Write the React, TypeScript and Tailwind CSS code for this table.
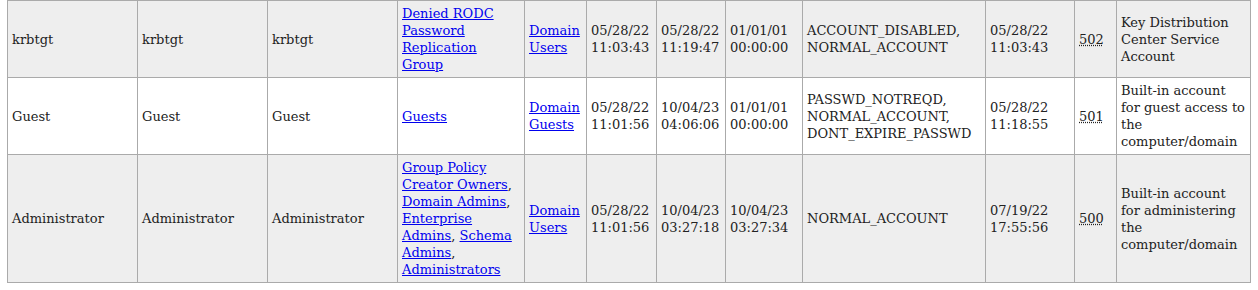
import React from 'react';

type Link = { text: string; href?: boolean };

type Row = {
  name: string;
  sam: string;
  cn: string;
  groups: string[];
  primary: string;
  created: string[];
  changed: string[];
  logon: string[];
  flags: string[];
  pwdSet: string[];
  rid: string;
  desc: string;
};

const rows: Row[] = [
  {
    name: 'krbtgt',
    sam: 'krbtgt',
    cn: 'krbtgt',
    groups: ['Denied RODC Password Replication Group'],
    primary: 'Domain Users',
    created: ['05/28/22', '11:03:43'],
    changed: ['05/28/22', '11:19:47'],
    logon: ['01/01/01', '00:00:00'],
    flags: ['ACCOUNT_DISABLED,', 'NORMAL_ACCOUNT'],
    pwdSet: ['05/28/22', '11:03:43'],
    rid: '502',
    desc: 'Key Distribution Center Service Account',
  },
  {
    name: 'Guest',
    sam: 'Guest',
    cn: 'Guest',
    groups: ['Guests'],
    primary: 'Domain Guests',
    created: ['05/28/22', '11:01:56'],
    changed: ['10/04/23', '04:06:06'],
    logon: ['01/01/01', '00:00:00'],
    flags: ['PASSWD_NOTREQD,', 'NORMAL_ACCOUNT,', 'DONT_EXPIRE_PASSWD'],
    pwdSet: ['05/28/22', '11:18:55'],
    rid: '501',
    desc: 'Built-in account for guest access to the computer/domain',
  },
  {
    name: 'Administrator',
    sam: 'Administrator',
    cn: 'Administrator',
    groups: [
      'Group Policy Creator Owners',
      'Domain Admins',
      'Enterprise Admins',
      'Schema Admins',
      'Administrators',
    ],
    primary: 'Domain Users',
    created: ['05/28/22', '11:01:56'],
    changed: ['10/04/23', '03:27:18'],
    logon: ['10/04/23', '03:27:34'],
    flags: ['NORMAL_ACCOUNT'],
    pwdSet: ['07/19/22', '17:55:56'],
    rid: '500',
    desc: 'Built-in account for administering the computer/domain',
  },
];

const widths = [130, 130, 130, 127, 62, 70, 69, 77, 183, 89, 42, 134];

const cell = 'border border-[#aaa] px-[4px] py-[4px] align-middle';
const link = 'text-[#00e] underline';

function Lines({ parts }: { parts: string[] }) {
  return (
    <>
      {parts.map((p, i) => (
        <React.Fragment key={i}>
          {i > 0 && <br />}
          {p}
        </React.Fragment>
      ))}
    </>
  );
}

export default function App() {
  return (
    <div
      className="bg-white pl-[7px] text-[13px] leading-[17px] text-[#222]"
      style={{ fontFamily: '"DejaVu Serif", serif' }}
    >
      <table className="table-fixed border-collapse w-[1244px]">
        <colgroup>
          {widths.map((w, i) => (
            <col key={i} style={{ width: w }} />
          ))}
        </colgroup>
        <tbody>
          {rows.map((r, i) => (
            <tr key={r.rid} className={i % 2 === 0 ? 'bg-[#eee]' : 'bg-white'}>
              <td className={cell}>{r.name}</td>
              <td className={cell}>{r.sam}</td>
              <td className={cell}>{r.cn}</td>
              <td className={cell}>
                {r.groups.map((g, j) => (
                  <React.Fragment key={g}>
                    <a href="#" className={link}>
                      {g}
                    </a>
                    {j < r.groups.length - 1 && ', '}
                  </React.Fragment>
                ))}
              </td>
              <td className={cell}>
                <a href="#" className={link}>
                  {r.primary}
                </a>
              </td>
              <td className={cell}>
                <Lines parts={r.created} />
              </td>
              <td className={cell}>
                <Lines parts={r.changed} />
              </td>
              <td className={cell}>
                <Lines parts={r.logon} />
              </td>
              <td className={cell}>
                <Lines parts={r.flags} />
              </td>
              <td className={cell}>
                <Lines parts={r.pwdSet} />
              </td>
              <td className={cell}>
                <abbr className="underline decoration-dotted" title={r.rid}>
                  {r.rid}
                </abbr>
              </td>
              <td className={cell}>{r.desc}</td>
            </tr>
          ))}
        </tbody>
      </table>
    </div>
  );
}
